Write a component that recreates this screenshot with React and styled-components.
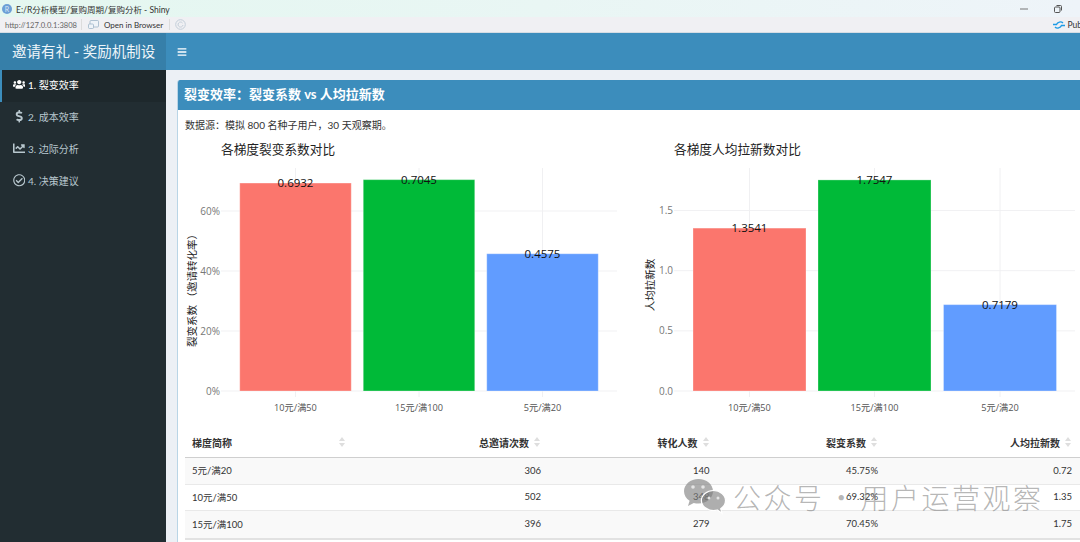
import React from 'react'
import styled, { createGlobalStyle } from 'styled-components'
import { FaBars, FaChartLine, FaDollarSign, FaRegCheckCircle, FaUsers } from 'react-icons/fa'

const SANS = `'Lato', 'Noto Sans CJK SC', sans-serif`
const PLOT = `'Open Sans', 'Noto Sans CJK SC', sans-serif`

const GlobalStyle = createGlobalStyle`
	html, body {
		margin: 0;
		padding: 0;
		overflow: hidden;
		background: #ecf0f5;
	}
	* {
		box-sizing: border-box;
	}
`
const Page = styled.div`
	position: relative;
	width: 1080px;
	height: 542px;
	overflow: hidden;
	font-family: ${SANS};
`
const TitleBar = styled.div`
	display: flex;
	align-items: center;
	height: 17px;
	padding-left: 2px;
	background: linear-gradient(90deg, #e4f7f0 0%, #e9f6f4 50%, #eef4f9 100%);
	font-size: 8.5px;
	color: #333;
`
const AppBadge = styled.span`
	display: flex;
	align-items: center;
	justify-content: center;
	width: 10px;
	height: 10px;
	margin-right: 4px;
	border-radius: 50%;
	background: #6d9fd6;
	color: #dbe9f7;
	font-size: 7px;
`
const WindowButtons = styled.div`
	display: flex;
	align-items: center;
	gap: 26px;
	margin-left: auto;
	padding-right: 18px;
`
const ToolBar = styled.div`
	display: flex;
	align-items: center;
	height: 16px;
	padding-left: 5px;
	background: #f0f0f3;
	border-bottom: 1px solid #d5dde4;
	font-size: 8px;
	color: #333;
	white-space: nowrap;
`
const Address = styled.span`
	width: 76px;
	color: #666;
	font-size: 7.6px;
`
const Divider = styled.span`
	width: 1px;
	height: 11px;
	background: #dcdcdc;
`
const OpenButton = styled.span`
	display: flex;
	align-items: center;
	gap: 5px;
	width: 87px;
	padding-left: 6px;
`
const Publish = styled.span`
	display: flex;
	align-items: center;
	gap: 2px;
	margin-left: auto;
	margin-right: -2px;
	font-size: 8.5px;
`
const Header = styled.header`
	display: flex;
	height: 37px;
	background: #3c8dbc;
	color: #fff;
`
const Logo = styled.div`
	display: flex;
	align-items: center;
	width: 166px;
	padding: 0 0 3px 12px;
	background: #367fa9;
	font-size: 14.5px;
	color: #eef5f9;
	white-space: nowrap;
`
const MenuToggle = styled.div`
	display: flex;
	align-items: center;
	padding-left: 11px;
	font-size: 10px;
`
const Body = styled.div`
	display: flex;
	height: 472px;
`
const Sidebar = styled.nav`
	flex: 0 0 166px;
	background: #222d32;
`
const NavItem = styled.div`
	display: flex;
	align-items: center;
	height: 32px;
	padding-left: ${p => (p.$active ? '10px' : '12px')};
	padding-bottom: 3px;
	border-left: ${p => (p.$active ? '2px solid #3c8dbc' : 'none')};
	background: ${p => (p.$active ? '#1e282c' : 'transparent')};
	color: ${p => (p.$active ? '#fff' : '#b8c7ce')};
	font-size: 10px;
`
const NavIcon = styled.span`
	display: flex;
	justify-content: center;
	width: 14px;
	margin-right: 2px;
	font-size: 12.5px;
`
const Content = styled.main`
	flex: 0 0 914px;
	padding: 10px 0 0 11px;
`
const Box = styled.section`
	width: 903px;
	height: 470px;
	background: #fff;
	border-left: 1px solid #b9d5e6;
	border-radius: 3px 0 0 0;
	overflow: hidden;
`
const BoxTitle = styled.h3`
	display: flex;
	align-items: center;
	height: 30px;
	margin: 0 0 0 -1px;
	padding: 0 0 3px 7px;
	background: #3c8dbc;
	color: #fff;
	font-size: 13px;
	font-weight: 700;
`
const BoxBody = styled.div`
	padding: 8px 0 0 7px;
`
const Note = styled.p`
	height: 14px;
	margin: 0 0 8px;
	font-size: 10px;
	line-height: 14px;
	color: #333;
`
const Charts = styled.div`
	display: flex;
`
const ChartSvg = styled.svg`
	display: block;
	flex: 0 0 auto;
	font-family: ${PLOT};
`
const Table = styled.div`
	display: grid;
	grid-template-columns: 169px 195px 168.5px 168.5px 194px;
	width: 895px;
	font-size: 9.5px;
	color: #333;
	border-bottom: 2px solid #e2e2e2;
`
const HeadCell = styled.div`
	position: relative;
	display: flex;
	align-items: center;
	justify-content: ${p => (p.$left ? 'flex-start' : 'flex-end')};
	height: 28px;
	padding: 0 20px 3px 7px;
	border-bottom: 1px solid #cfcfcf;
	font-size: 10px;
	font-weight: 700;
	color: #333;
`
const Cell = styled.div`
	display: flex;
	align-items: center;
	justify-content: ${p => (p.$left ? 'flex-start' : 'flex-end')};
	height: 26.5px;
	padding: 0 8px 1px 7px;
	background: ${p => (p.$odd ? '#f9f9f9' : '#fff')};
	border-bottom: ${p => (p.$last ? 'none' : '1px solid #e9e9e9')};
`
const SortMark = styled.span`
	position: absolute;
	right: 9px;
	top: 7px;
	width: 6px;
	height: 10px;
	&::before,
	&::after {
		content: '';
		position: absolute;
		left: 0;
		border-left: 3px solid transparent;
		border-right: 3px solid transparent;
	}
	&::before {
		top: 0;
		border-bottom: 4px solid #dedede;
	}
	&::after {
		bottom: 0;
		border-top: 4px solid #dedede;
	}
`
const Watermark = styled.div`
	position: absolute;
	left: 683px;
	top: 478px;
	display: flex;
	align-items: center;
	gap: 7px;
	height: 38px;
	font-family: 'Noto Sans CJK SC', sans-serif;
	font-size: 28px;
	font-weight: 300;
	letter-spacing: 2.5px;
	word-spacing: -6px;
	color: rgba(120, 120, 120, 0.55);
	white-space: nowrap;
	pointer-events: none;
`

const NAV = [
	{ icon: <FaUsers />, label: '1. 裂变效率', active: true },
	{ icon: <FaDollarSign />, label: '2. 成本效率' },
	{ icon: <FaChartLine />, label: '3. 边际分析' },
	{ icon: <FaRegCheckCircle />, label: '4. 决策建议' },
]

const COLUMNS = ['梯度简称', '总邀请次数', '转化人数', '裂变系数', '人均拉新数']
const ROWS = [
	['5元/满20', '306', '140', '45.75%', '0.72'],
	['10元/满50', '502', '348', '69.32%', '1.35'],
	['15元/满100', '396', '279', '70.45%', '1.75'],
]

const COLORS = ['#fb766d', '#00ba38', '#619cff']
const BASE_Y = 251
const TOP_Y = 28

const BarChart = ({ width, title, titleX, yTitle, yTitleX, yTitleY, axisX, plotLeft, plotRight, barWidth, ticks, bars, perUnit }) => (
	<ChartSvg width={width} height={290} viewBox={`0 0 ${width} 290`}>
		<text x={titleX} y={14} fontSize="12.7" fill="#222" fontFamily="'Noto Sans CJK SC', sans-serif">
			{title}
		</text>
		{ticks.map(t => (
			<g key={t.label}>
				<line x1={plotLeft} x2={plotRight} y1={BASE_Y - t.value * perUnit} y2={BASE_Y - t.value * perUnit} stroke="#f1f1f3" />
				<text x={axisX} y={BASE_Y - t.value * perUnit + 3.5} fontSize="10" fill="#777" textAnchor="end">
					{t.label}
				</text>
			</g>
		))}
		{bars.map((b, i) => (
			<g key={b.name}>
				<line x1={b.x} x2={b.x} y1={TOP_Y} y2={BASE_Y + 6} stroke="#f0f0f2" />
				<rect
					x={b.x - barWidth / 2}
					y={BASE_Y - b.value * perUnit}
					width={barWidth}
					height={b.value * perUnit}
					fill={COLORS[i]}
					stroke="rgba(255,255,255,0.3)"
				/>
				<text x={b.x} y={BASE_Y - b.value * perUnit + 4} fontSize="11.5" fill="#111" textAnchor="middle">
					{b.label}
				</text>
				<text x={b.x} y={271} fontSize="9.2" fill="#555" textAnchor="middle">
					{b.name}
				</text>
			</g>
		))}
		<text
			transform={`translate(${yTitleX} ${yTitleY}) rotate(-90)`}
			fontSize="10.5"
			fill="#222"
			textAnchor="middle"
			fontFamily="'Noto Sans CJK SC', sans-serif"
		>
			{yTitle}
		</text>
	</ChartSvg>
)

const WeChatMark = () => (
	<svg width="43" height="38" viewBox="0 0 43 38" fill="rgba(125,125,125,0.62)">
		<path d="M15.500 1C7.500 1 1 6.500 1 13.200c0 3.900 2.200 7.300 5.600 9.600L5 28l5.800-3.100c1.500.4 3 .6 4.700.6 8 0 14.500-5.500 14.500-12.300S23.500 1 15.500 1z" />
		<path
			stroke="#fff"
			strokeWidth="1.200"
			d="M30.500 12.500C23.800 12.500 18.400 17 18.400 22.500s5.400 10 12.100 10c1.300 0 2.600-.2 3.800-.5l4.700 3.200-1.300-4.500c2.900-1.900 4.800-4.800 4.800-8.200 0-5.500-5.300-10-12-10z"
		/>
		<circle cx="10" cy="9" r="1.800" fill="#e4e4e4" />
		<circle cx="20" cy="9" r="1.800" fill="#e4e4e4" />
		<circle cx="26" cy="20" r="1.500" fill="#e4e4e4" />
		<circle cx="35" cy="20" r="1.500" fill="#e4e4e4" />
	</svg>
)

const App = () => {
	return (
		<Page>
			<GlobalStyle />
			<TitleBar>
				<AppBadge>R</AppBadge>
				E:/R分析模型/复购周期/复购分析 - Shiny
				<WindowButtons>
					<svg width="8" height="8" viewBox="0 0 8 8">
						<path d="M0 4h8" stroke="#777" />
					</svg>
					<svg width="8" height="8" viewBox="0 0 8 8" fill="none" stroke="#555">
						<rect x=".5" y="2" width="5.500" height="5.500" rx="1" />
						<path d="M2.500.5h4a1 1 0 0 1 1 1v4" />
					</svg>
				</WindowButtons>
			</TitleBar>
			<ToolBar>
				<Address>http://127.0.0.1:3808</Address>
				<Divider />
				<OpenButton>
					<svg width="11" height="9" viewBox="0 0 11 9" fill="#eef3f8" stroke="#9db4c8" strokeWidth=".8">
						<rect x="2" y=".5" width="8.500" height="6.500" rx="1" />
						<rect x=".5" y="4" width="5" height="4.500" rx="1" />
					</svg>
					Open in Browser
				</OpenButton>
				<Divider />
				<svg style={{ marginLeft: 5 }} width="11" height="11" viewBox="0 0 11 11" fill="none" stroke="#c3ced9">
					<circle cx="5.500" cy="5.500" r="4.800" />
					<path d="M7.500 4A2.500 2.500 0 1 0 8 6" />
				</svg>
				<Publish>
					<svg width="12" height="10" viewBox="0 0 12 10" fill="none" stroke="#1c9be6" strokeWidth="1.400">
						<path d="M0 4.500h3.500C4.500 2 8 1 10 3" />
						<path d="M12 5.500H8.500C7.500 8 4 9 2 7" />
					</svg>
					Pub
				</Publish>
			</ToolBar>
			<Header>
				<Logo>邀请有礼 - 奖励机制设</Logo>
				<MenuToggle>
					<FaBars />
				</MenuToggle>
			</Header>
			<Body>
				<Sidebar>
					{NAV.map(item => (
						<NavItem key={item.label} $active={item.active}>
							<NavIcon>{item.icon}</NavIcon>
							{item.label}
						</NavItem>
					))}
				</Sidebar>
				<Content>
					<Box>
						<BoxTitle>裂变效率：裂变系数 vs 人均拉新数</BoxTitle>
						<BoxBody>
							<Note>数据源：模拟 800 名种子用户，30 天观察期。</Note>
							<Charts>
								<BarChart
									width={453}
									title="各梯度裂变系数对比"
									titleX={36}
									yTitle="裂变系数 （邀请转化率）"
									yTitleX={11}
									yTitleY={148}
									axisX={35}
									plotLeft={36}
									plotRight={432}
									barWidth={111.500}
									perUnit={300}
									ticks={[
										{ value: 0, label: '0%' },
										{ value: 0.2, label: '20%' },
										{ value: 0.4, label: '40%' },
										{ value: 0.6, label: '60%' },
									]}
									bars={[
										{ name: '10元/满50', value: 0.6932, label: '0.6932', x: 110.500 },
										{ name: '15元/满100', value: 0.7045, label: '0.7045', x: 234 },
										{ name: '5元/满20', value: 0.4575, label: '0.4575', x: 357.500 },
									]}
								/>
								<BarChart
									width={442}
									title="各梯度人均拉新数对比"
									titleX={36}
									yTitle="人均拉新数"
									yTitleX={16}
									yTitleY={145}
									axisX={35}
									plotLeft={36}
									plotRight={437}
									barWidth={113}
									perUnit={120.300}
									ticks={[
										{ value: 0, label: '0.0' },
										{ value: 0.5, label: '0.5' },
										{ value: 1, label: '1.0' },
										{ value: 1.5, label: '1.5' },
									]}
									bars={[
										{ name: '10元/满50', value: 1.3541, label: '1.3541', x: 111.500 },
										{ name: '15元/满100', value: 1.7547, label: '1.7547', x: 236.500 },
										{ name: '5元/满20', value: 0.7179, label: '0.7179', x: 362 },
									]}
								/>
							</Charts>
							<Table>
								{COLUMNS.map((c, i) => (
									<HeadCell key={c} $left={i === 0}>
										{c}
										<SortMark />
									</HeadCell>
								))}
								{ROWS.map((row, r) =>
									row.map((v, i) => (
										<Cell key={`${r}-${i}`} $left={i === 0} $odd={r % 2 === 0} $last={r === ROWS.length - 1}>
											{v}
										</Cell>
									)),
								)}
							</Table>
						</BoxBody>
					</Box>
				</Content>
			</Body>
			<Watermark>
				<WeChatMark />
				公众号 · 用户运营观察
			</Watermark>
		</Page>
	)
}

export default App
